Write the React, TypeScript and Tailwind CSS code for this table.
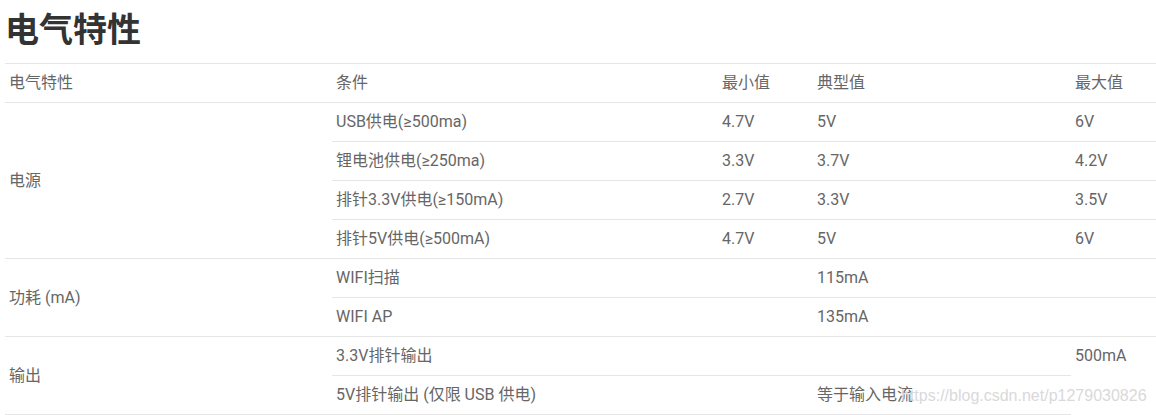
import React from "react";

const cell = "border-t border-[#e6e6e6] pl-[4px] pr-[4px] py-[7px] leading-[24px] align-middle text-left font-normal";
const last = "border-b";

export default function App() {
  return (
    <div
      className="relative w-[1156px] h-[415px] overflow-hidden bg-white pl-[5px] text-[#666666]"
      style={{ fontFamily: 'Roboto, "Noto Sans CJK SC", sans-serif' }}
    >
      <h2 className="mt-[6px] mb-[9px] text-[34px] leading-[48px] font-bold text-[#333333]">电气特性</h2>
      <table className="table-fixed border-separate border-spacing-0 w-[1151px] text-[16px]">
        <colgroup>
          <col className="w-[327px]" />
          <col className="w-[386px]" />
          <col className="w-[95px]" />
          <col className="w-[258px]" />
          <col className="w-[85px]" />
        </colgroup>
        <thead>
          <tr>
            <th className={cell}>电气特性</th>
            <th className={cell}>条件</th>
            <th className={cell}>最小值</th>
            <th className={cell}>典型值</th>
            <th className={cell}>最大值</th>
          </tr>
        </thead>
        <tbody>
          <tr>
            <td className={cell} rowSpan={4}>电源</td>
            <td className={cell}>USB供电(≥500ma)</td>
            <td className={cell}>4.7V</td>
            <td className={cell}>5V</td>
            <td className={cell}>6V</td>
          </tr>
          <tr>
            <td className={cell}>锂电池供电(≥250ma)</td>
            <td className={cell}>3.3V</td>
            <td className={cell}>3.7V</td>
            <td className={cell}>4.2V</td>
          </tr>
          <tr>
            <td className={cell}>排针3.3V供电(≥150mA)</td>
            <td className={cell}>2.7V</td>
            <td className={cell}>3.3V</td>
            <td className={cell}>3.5V</td>
          </tr>
          <tr>
            <td className={cell}>排针5V供电(≥500mA)</td>
            <td className={cell}>4.7V</td>
            <td className={cell}>5V</td>
            <td className={cell}>6V</td>
          </tr>
          <tr>
            <td className={cell} rowSpan={2}>功耗 (mA)</td>
            <td className={cell}>WIFI扫描</td>
            <td className={cell}></td>
            <td className={cell}>115mA</td>
            <td className={cell}></td>
          </tr>
          <tr>
            <td className={cell}>WIFI AP</td>
            <td className={cell}></td>
            <td className={cell}>135mA</td>
            <td className={cell}></td>
          </tr>
          <tr>
            <td className={`${cell} ${last}`} rowSpan={2}>输出</td>
            <td className={cell}>3.3V排针输出</td>
            <td className={cell}></td>
            <td className={cell}></td>
            <td className={cell}>500mA</td>
          </tr>
          <tr>
            <td className={`${cell} ${last}`}>5V排针输出 (仅限 USB 供电)</td>
            <td className={`${cell} ${last}`}></td>
            <td className={`${cell} ${last}`}>等于输入电流</td>
          </tr>
        </tbody>
      </table>
      <div
        className="absolute left-[901px] top-[386px] text-[16px] leading-[20px] text-[#d9d9d9] whitespace-nowrap"
        style={{ fontFamily: '"Liberation Sans", Arial, sans-serif' }}
      >
        https://blog.csdn.net/p1279030826
      </div>
    </div>
  );
}
